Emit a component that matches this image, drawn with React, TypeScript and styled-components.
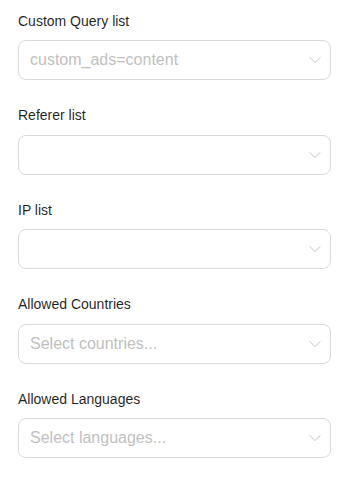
import React from "react";
import styled, { createGlobalStyle } from "styled-components";

const Global = createGlobalStyle`
  html, body { margin: 0; padding: 0; background: #ffffff; }
  body { font-family: "Liberation Sans", Arial, sans-serif; }
`;

const Form = styled.div`
  display: flex;
  flex-direction: column;
  gap: 24px;
  padding: 9.5px 14.5px 0 18px;
`;

const Field = styled.div`
  display: flex;
  flex-direction: column;
  gap: 8px;
`;

const Label = styled.label`
  font-size: 14px;
  line-height: 22.5px;
  color: rgba(0, 0, 0, 0.88);
`;

const SelectBox = styled.div`
  box-sizing: border-box;
  height: 40px;
  border: 1px solid #d9d9d9;
  border-radius: 8px;
  display: flex;
  align-items: center;
  padding: 0 9px 0 11px;
  background: #fff;
`;

const Placeholder = styled.span`
  flex: 1;
  font-size: 16px;
  color: #bfbfbf;
  white-space: nowrap;
`;

const Chevron = styled.svg`
  width: 12px;
  height: 12px;
  flex: none;
`;

const Arrow = () => (
  <Chevron viewBox="0 0 12 12">
    <polyline points="0.5,3.2 6,8.6 11.5,3.2" fill="none" stroke="#c4c4c4" strokeWidth="1" />
  </Chevron>
);

const fields = [
  { label: "Custom Query list", placeholder: "custom_ads=content" },
  { label: "Referer list", placeholder: "" },
  { label: "IP list", placeholder: "" },
  { label: "Allowed Countries", placeholder: "Select countries..." },
  { label: "Allowed Languages", placeholder: "Select languages..." },
];

export default function App() {
  return (
    <>
      <Global />
      <Form>
        {fields.map((f) => (
          <Field key={f.label}>
            <Label>{f.label}</Label>
            <SelectBox>
              <Placeholder>{f.placeholder}</Placeholder>
              <Arrow />
            </SelectBox>
          </Field>
        ))}
      </Form>
    </>
  );
}
